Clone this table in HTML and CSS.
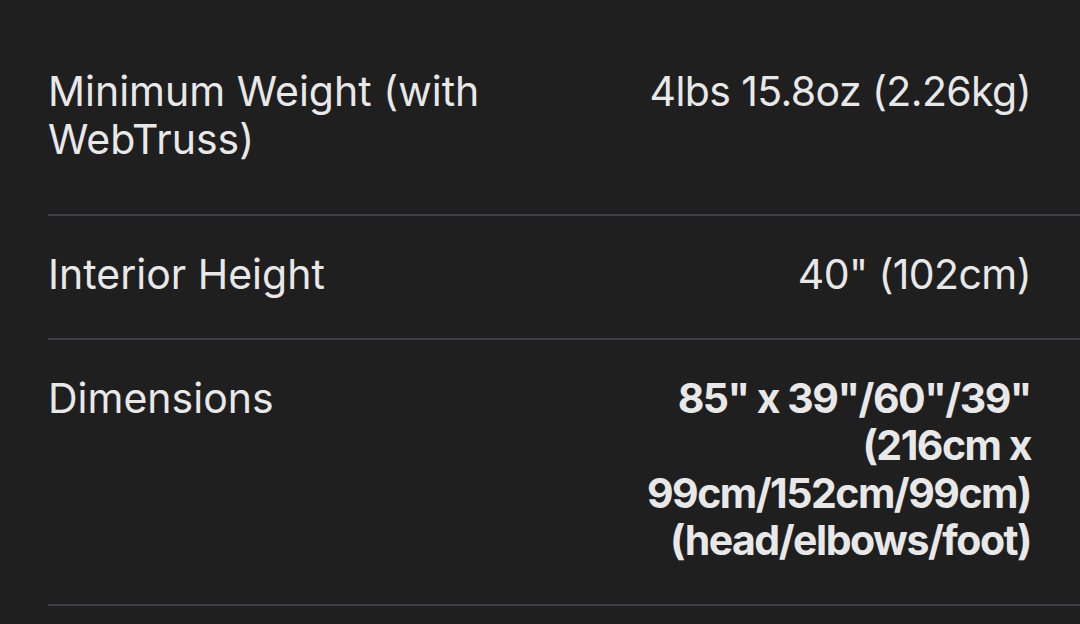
FILE: index.html
```html
<!DOCTYPE html>
<html lang="en">
<head>
<meta charset="utf-8">
<title>Specs</title>
<link rel="stylesheet" href="styles.css">
</head>
<body>
<div class="specs">
  <div class="row row-first">
    <div class="label">Minimum Weight (with WebTruss)</div>
    <div class="value">4lbs 15.8oz (2.26kg)</div>
  </div>
  <div class="row">
    <div class="label">Interior Height</div>
    <div class="value">40" (102cm)</div>
  </div>
  <div class="row">
    <div class="label">Dimensions</div>
    <div class="value bold">85" x 39"/60"/39" (216cm x 99cm/152cm/99cm) (head/elbows/foot)</div>
  </div>
</div>
</body>
</html>
```

FILE: styles.css
```css
html, body {
  margin: 0;
  padding: 0;
  background: #1f1f1f;
}
body {
  width: 1080px;
  height: 624px;
  overflow: hidden;
  font-family: Inter, Roboto, "Liberation Sans", sans-serif;
  color: #e8e8e8;
  font-size: 41px;
  line-height: 47.5px;
}
.specs {
  padding-top: 33px;
  margin-left: 48px;
}
.row {
  display: grid;
  grid-template-columns: 1fr 430px;
  column-gap: 40px;
  padding: 35px 49px 39px 0;
  border-bottom: 2px solid #3c3f43;
}
.row-first {
  padding-bottom: 51px;
}
.label {
  text-align: left;
}
.value {
  text-align: right;
  letter-spacing: -0.6px;
}
.bold {
  font-weight: 700;
  letter-spacing: -1.5px;
}
```
